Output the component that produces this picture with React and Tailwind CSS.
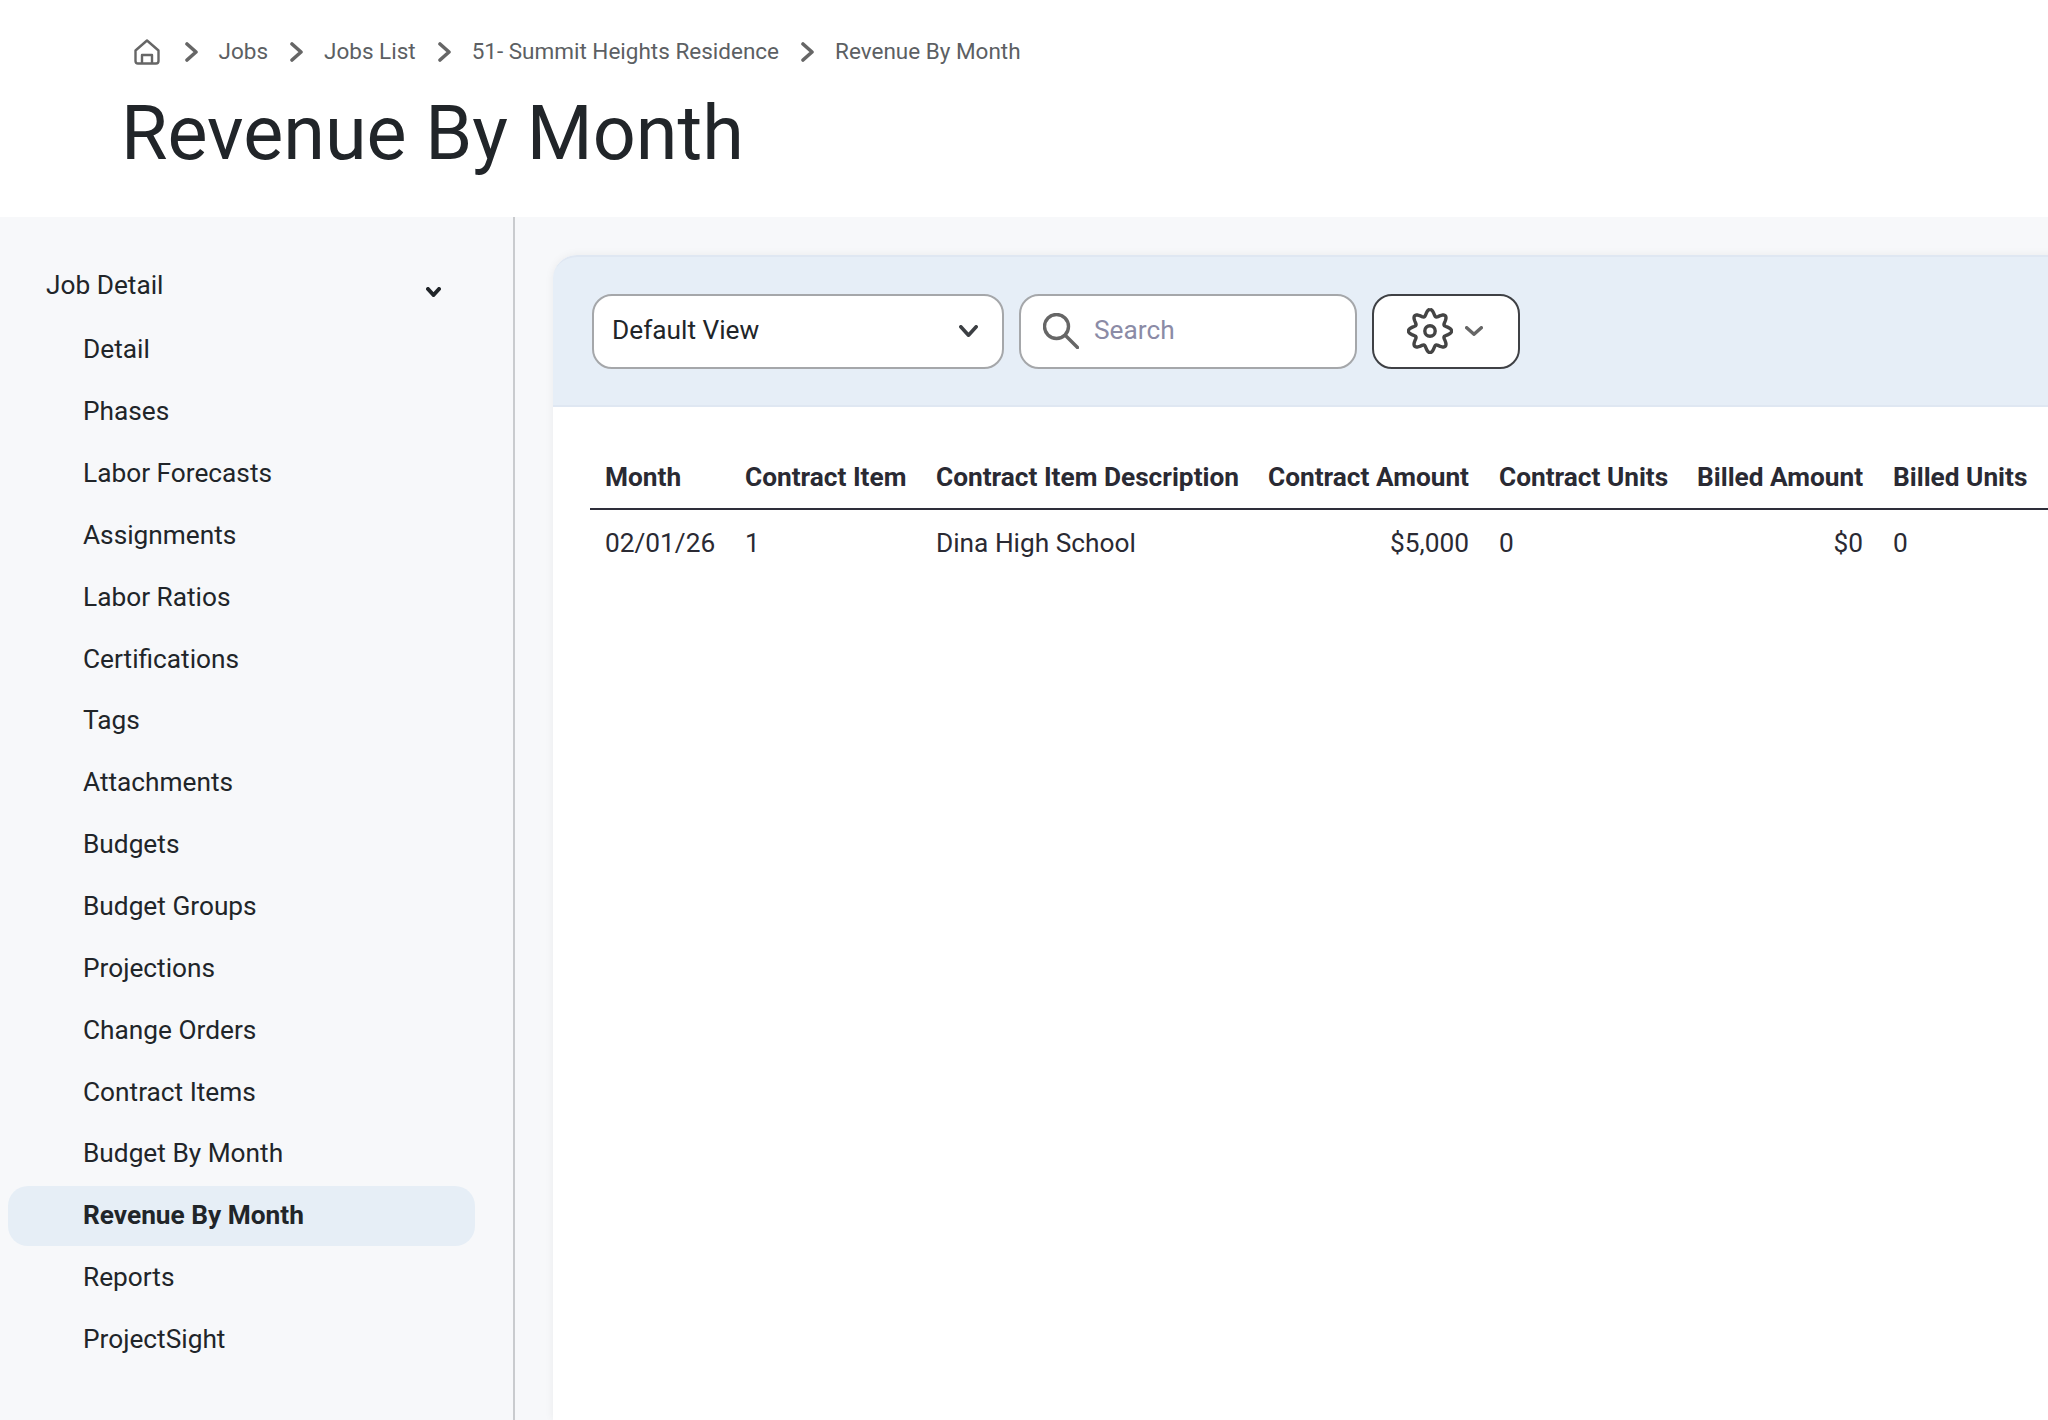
const navItems = [
    'Detail', 'Phases', 'Labor Forecasts', 'Assignments', 'Labor Ratios', 'Certifications', 'Tags', 'Attachments',
    'Budgets', 'Budget Groups', 'Projections', 'Change Orders', 'Contract Items', 'Budget By Month', 'Revenue By Month',
    'Reports', 'ProjectSight',
];

const crumbs = ['Jobs', 'Jobs List', '51- Summit Heights Residence'];

const columns = [
    { label: 'Month', value: '02/01/26', width: 'w-[140px]' },
    { label: 'Contract Item', value: '1', width: 'w-[191px]' },
    { label: 'Contract Item Description', value: 'Dina High School', width: 'w-[332px]' },
    { label: 'Contract Amount', value: '$5,000', width: 'w-[231px]', right: true },
    { label: 'Contract Units', value: '0', width: 'w-[198px]' },
    { label: 'Billed Amount', value: '$0', width: 'w-[196px]', right: true },
    { label: 'Billed Units', value: '0', width: 'w-[170px]' },
];

// scalloped outline for the settings cog, eight lobes
const cogPath = Array.from({ length: 161 }, (_, i) => {
    const a = (i / 160) * Math.PI * 2;
    const r = 18.4 + 3.2 * Math.cos(8 * a);
    return `${i === 0 ? 'M' : 'L'}${(23 + r * Math.sin(a)).toFixed(2)} ${(23 - r * Math.cos(a)).toFixed(2)}`;
}).join(' ');

function HomeIcon() {
    return (
        <svg width="26" height="26" viewBox="0 0 26 26" fill="none" stroke="#666" strokeWidth="2.4" strokeLinejoin="round" className="mr-[2.5px] shrink-0">
            <path d="M1.5 11.5 13 1.5l11.5 10V22a2.5 2.5 0 0 1-2.5 2.5H4A2.5 2.5 0 0 1 1.5 22z" />
            <path d="M8 24.5V16h10v8.5" />
        </svg>
    );
}

function CrumbChevron() {
    return (
        <svg width="13" height="20" viewBox="0 0 13 20" fill="none" stroke="#666" strokeWidth="3.6" strokeLinecap="round" strokeLinejoin="round" className="ml-[22px] mr-[21px] shrink-0">
            <path d="M2 2l9 8-9 8" />
        </svg>
    );
}

function DownChevron({ w, h, weight, color }) {
    return (
        <svg width={w} height={h} viewBox={`0 0 ${w} ${h}`} fill="none" stroke={color} strokeWidth={weight} strokeLinecap="round" strokeLinejoin="round" className="shrink-0">
            <path d={`M${weight / 2} ${weight / 2}L${w / 2} ${h - weight / 2}L${w - weight / 2} ${weight / 2}`} />
        </svg>
    );
}

function SearchIcon() {
    return (
        <svg width="36" height="36" viewBox="0 0 36 36" fill="none" stroke="#666" strokeWidth="3.4" strokeLinecap="round" className="shrink-0">
            <circle cx="13.5" cy="13.5" r="12" />
            <path d="M22.5 22.5 34.5 34.5" />
        </svg>
    );
}

function CogIcon() {
    return (
        <svg width="46" height="46" viewBox="0 0 46 46" fill="none" stroke="#444" strokeWidth="3.4" className="shrink-0">
            <path d={cogPath} />
            <circle cx="23" cy="23" r="5.2" />
        </svg>
    );
}

export default function App() {
    return (
        <div className="h-[1420px] w-[2048px] overflow-hidden bg-white font-['Roboto',sans-serif] text-[#212529]">
            {/* Page header */}
            <header className="h-[217px] pl-[121px]">
                <nav className="flex h-[102px] items-center pl-[13px] pt-[2px] text-[22.5px] text-[#5c5f63]">
                    <HomeIcon />
                    {crumbs.map((crumb) => (
                        <span key={crumb} className="flex items-center">
                            <CrumbChevron />
                            <span>{crumb}</span>
                        </span>
                    ))}
                    <CrumbChevron />
                    <span>Revenue By Month</span>
                </nav>
                <h1 className="mt-px text-[75.5px] leading-[60px] text-[#212529]">Revenue By Month</h1>
            </header>

            <div className="flex h-[1203px]">
                {/* Sidebar */}
                <aside className="h-full w-[515px] shrink-0 border-r-2 border-[#c9cbce] bg-[#f7f8fa] pl-[8px] pt-[38px]">
                    <div className="mb-[2px] flex h-[62px] items-center justify-between pl-[38px] pr-[72px] text-[26.25px]">
                        <span>Job Detail</span>
                        <span className="mt-[12px]">
                            <DownChevron w={15} h={10} weight={4} color="#212529" />
                        </span>
                    </div>
                    <ul className="flex w-[467px] flex-col">
                        {navItems.map((item) => (
                            <li key={item} className="flex h-[61.87px] items-center">
                                <div className={`flex h-[60px] w-full items-center pl-[75px] text-[26.25px] ${item === 'Revenue By Month' ? 'rounded-[20px] bg-[#e6eef6] font-bold' : ''}`}>
                                    {item}
                                </div>
                            </li>
                        ))}
                    </ul>
                </aside>

                {/* Main content */}
                <main className="min-w-0 flex-1 bg-[#f7f8fa] pl-[38px] pt-[38px]">
                    <div className="h-full w-[1600px] rounded-tl-[24px] bg-white shadow-[0_0_10px_rgba(0,0,0,0.06)]">
                        <div className="flex h-[152px] items-center gap-[15px] rounded-tl-[24px] border-b-2 border-t-2 border-[#dfe7f2] bg-[#e6eef7] pl-[39px]">
                            <div className="flex h-[75px] w-[412px] items-center justify-between rounded-[20px] border-2 border-[#a5a7aa] bg-white pl-[18px] pr-[24px] text-[26.25px]">
                                <span>Default View</span>
                                <DownChevron w={19} h={12} weight={3.6} color="#3c3f43" />
                            </div>
                            <div className="flex h-[75px] w-[338px] items-center gap-[15px] rounded-[20px] border-2 border-[#a5a7aa] bg-white pl-[22px] text-[26.25px] text-[#8b8ba6]">
                                <SearchIcon />
                                <span>Search</span>
                            </div>
                            <div className="flex h-[75px] w-[148px] items-center justify-center gap-[12px] rounded-[20px] border-2 border-[#3f4145] bg-white pr-[3px]">
                                <CogIcon />
                                <DownChevron w={18} h={10} weight={3.4} color="#666" />
                            </div>
                        </div>

                        <div className="ml-[37px] mt-[37px] text-[#2a2a33]">
                            <div className="flex h-[66px] items-center border-b-2 border-[#2e2e3a] pt-[3px] text-[26.25px] font-bold">
                                {columns.map((col) => (
                                    <div key={col.label} className={`${col.width} shrink-0 px-[15px] whitespace-nowrap ${col.right ? 'text-right' : ''}`}>
                                        {col.label}
                                    </div>
                                ))}
                            </div>
                            <div className="flex h-[66px] items-center pt-[2px] text-[26.25px]">
                                {columns.map((col) => (
                                    <div key={col.label} className={`${col.width} shrink-0 px-[15px] whitespace-nowrap ${col.right ? 'text-right' : ''}`}>
                                        {col.value}
                                    </div>
                                ))}
                            </div>
                        </div>
                    </div>
                </main>
            </div>
        </div>
    );
}
